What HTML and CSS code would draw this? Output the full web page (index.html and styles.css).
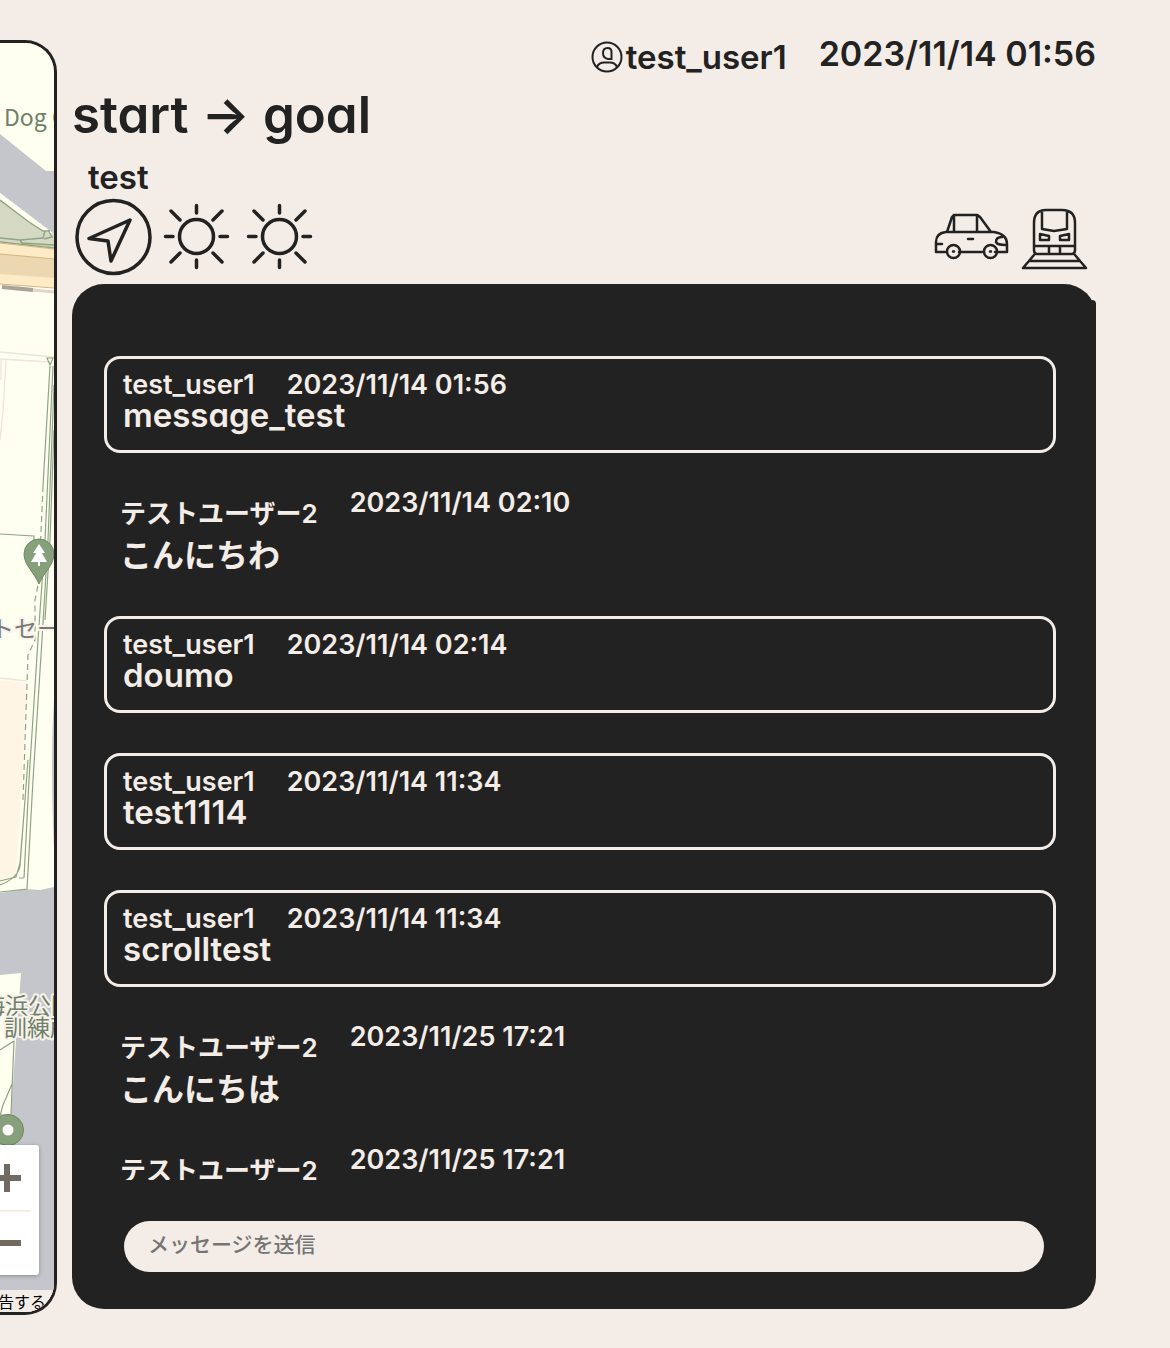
FILE: index.html
```html
<!DOCTYPE html>
<html lang="ja">
<head>
<meta charset="utf-8">
<meta name="viewport" content="width=device-width, initial-scale=1">
<title>start → goal</title>
<link rel="stylesheet" href="styles.css">
</head>
<body>
<div class="shell">
  <aside class="map" aria-label="地図">
    <svg class="map-canvas" viewBox="0 43 54 1269" preserveAspectRatio="xMinYMin slice">
      <rect y="43" width="54" height="1269" fill="#fffff0"/>
      <!-- water and park at the top -->
      <path d="M0 134L46 171H54V234L0 193Z" fill="#c5c6cb"/>
      <path d="M0 193L54 234L46 232L29 222L0 200Z" fill="#fffff0"/>
      <path d="M0 200L29 222L43 231L54 234V248L0 242Z" fill="#d5d9c3"/>
      <path d="M0 200L29 222L43 231H50M0 238L20 240L43 238L45 231M48 230L52 237L44 239M20 240L22 243L54 245M54 248L0 242" fill="none" stroke="#8fa485" stroke-width="1.4"/>
      <!-- main road -->
      <path d="M0 243L54 249V288L0 284Z" fill="#fdebc5"/>
      <path d="M0 254L54 259V278L0 274Z" fill="#ecd8b0"/>
      <path d="M0 243L54 249M0 254L54 259M0 284L54 288" fill="none" stroke="#d3b77f" stroke-width="1.2"/>
      <path d="M2 287L33 290" stroke="#aaa197" stroke-width="4"/>
      <path d="M33 290L54 292" stroke="#e2d5ca" stroke-width="3"/>
      <!-- side streets -->
      <path d="M0 352L54 357M0 359L50 362M1 359V380M6 359L3 412L0 440" fill="none" stroke="#f0e3da" stroke-width="1.3"/>
      <path d="M0 680L27 683L21 800L16 877L0 882Z" fill="#fff5e5"/>
      <path d="M0 678L27 681" stroke="#f0e3da" stroke-width="1.5"/>
      <path d="M54 700Q50 760 54 850Z" fill="#c5c6cb"/>
      <path d="M0 893L26 889L40 890L54 887V1312H0V1110L12 1040L0 1060V975L21 973L18 1008H0Z" fill="#c5c6cb"/>
      <path d="M0 975L21 973L16 1040L11 1114H0Z" fill="#fffff0"/>
      <!-- footpaths -->
      <g fill="none" stroke="#8fa485" stroke-width="1.2">
        <path d="M47 358L53 358L50 365ZM50 366L43 486M53 366L45 540L38 640L29 780L24 878"/>
        <path d="M54 385L48 540L42 640L33 780L27 889L0 892M54 430L50 540L45 620"/>
        <path d="M0 534L34 536L33 560M25 800L20 863L16 877L0 881M28 760L20 866Q18 878 0 885M24 878H19"/>
        <path d="M43 486L39 580L35 600L35 640L28 655L23 800" stroke-dasharray="6 4"/>
        <path d="M0 1050L14 1041L11 1114M12 1084L3 1105L0 1116"/>
      </g>
      <!-- pins -->
      <path d="M39 584C34 572 24 565 24 554A15 15 0 0 1 54 554C54 565 44 572 39 584Z" fill="#87a07c" stroke="#6d8864"/>
      <path d="M39 544L45 553H42L47 562H40V566H38V562H31L36 553H33Z" fill="#fff"/>
      <circle cx="8" cy="1130" r="15.500" fill="#87a07c" stroke="#6d8864"/>
      <circle cx="8" cy="1130" r="5.500" fill="#fff"/>
      <g class="map-label">
        <text x="4" y="126" class="map-label-park">Dog C</text>
        <text x="-9" y="637" class="map-label-place">トセー</text>
        <text x="-18" y="1014">海浜公園</text>
        <text x="4" y="1036">訓練所</text>
      </g>
    </svg>
    <div class="map-zoom">
      <button type="button" aria-label="拡大"><svg width="28" height="28"><path d="M0 14H28M14 0V28"/></svg></button>
      <button type="button" aria-label="縮小"><svg width="28" height="28"><path d="M0 14H28"/></svg></button>
    </div>
    <a class="map-report" href="#">告する</a>
  </aside>

  <main class="main">
    <header class="top">
      <span class="user">
        <svg class="user-icon" viewBox="0 0 32 32"><circle cx="16" cy="16" r="14.500"/><path d="M20.500 18H17Q12 17 12 12Q12 7 16.500 7Q20.500 7 20.500 11ZM6 26Q8 21.500 13 21.500H19Q24 21.500 26 26"/></svg>test_user1
      </span>
      <time class="top-time">2023/11/14 01:56</time>
    </header>
    <h1 class="title">start → goal</h1>
    <p class="comment">test</p>
    <div class="icons">
      <svg viewBox="0 0 80 80"><circle cx="41.500" cy="41" r="36.500"/><path d="M58 24L17 42.500L36 45L39 65Z"/></svg>
      <svg viewBox="0 0 80 80"><circle cx="40.500" cy="40.500" r="17"/><path d="M40.500 9.500V17M40.500 64V71.500M9.500 40.500H17M64 40.500H71.500M15 15L24 24M57 57L66 66M66 15L57 24M24 57L15 66"/></svg>
      <svg viewBox="0 0 80 80"><circle cx="39.500" cy="40.500" r="17"/><path d="M39.500 9.500V17M39.500 64V71.500M8.500 40.500H16M63 40.500H70.500M14 15L23 24M56 57L65 66M65 15L56 24M23 57L14 66"/></svg>
      <svg class="icon-car" viewBox="1 0 80 80"><path d="M14 56H5V46Q5 37 15 36H63Q76 38 76 48V56H64M28 56H51M16 36L21 21Q22 19 24 19H45Q47 19 49 21L60 36M23 19V36M46 19V36M5 48H11M37 43H42M71 41Q65 41 65 46Q66 49 75 49"/><circle cx="22.500" cy="55.500" r="6.500"/><circle cx="59.500" cy="55.500" r="6.500"/><path d="M22 55.500H23M59 55.500H60"/></svg>
      <svg viewBox="2 0 80 80"><path d="M23 58Q20 58 20 54V27Q20 14 32 14H48Q61 14 61 27V54Q61 58 58 58ZM28 15V33L40 35L53 33V15M20 50H61M35 50V58M46 50V58M26 38L35 40V44H26ZM55 38L46 40V44H55Z"/><path d="M20 59L9 72H72L61 59M15 65H66"/></svg>
    </div>

    <section class="chat">
      <div class="messages">
        <article class="message own">
          <div class="meta"><span>test_user1</span><time>2023/11/14 01:56</time></div>
          <p>message_test</p>
        </article>
        <article class="message">
          <div class="meta"><span class="name-ja">テストユーザー2</span><time>2023/11/14 02:10</time></div>
          <p class="body-ja">こんにちわ</p>
        </article>
        <article class="message own">
          <div class="meta"><span>test_user1</span><time>2023/11/14 02:14</time></div>
          <p>doumo</p>
        </article>
        <article class="message own">
          <div class="meta"><span>test_user1</span><time>2023/11/14 11:34</time></div>
          <p>test1114</p>
        </article>
        <article class="message own">
          <div class="meta"><span>test_user1</span><time>2023/11/14 11:34</time></div>
          <p>scrolltest</p>
        </article>
        <article class="message">
          <div class="meta"><span class="name-ja">テストユーザー2</span><time>2023/11/25 17:21</time></div>
          <p class="body-ja">こんにちは</p>
        </article>
        <article class="message">
          <div class="meta"><span class="name-ja">テストユーザー2</span><time>2023/11/25 17:21</time></div>
        </article>
      </div>
      <form class="composer">
        <input type="text" aria-label="メッセージ" placeholder="メッセージを送信">
      </form>
    </section>
  </main>
</div>
</body>
</html>
```
FILE: styles.css
```css
:root {
  --ink: #222;
  --paper: #f4ece6;
}

* {
  box-sizing: border-box;
}

body {
  margin: 0;
  background: var(--paper);
  color: var(--ink);
  font-family: Inter, "Noto Sans CJK JP", sans-serif;
  font-weight: 600;
  font-feature-settings: "cv11";
}

p,
h1 {
  margin: 0;
}

.shell {
  display: flex;
  gap: 15px;
  height: 100vh;
  padding: 40px 74px 33px 0;
}

/* Map */
.map {
  position: relative;
  flex: none;
  width: 57px;
  overflow: hidden;
  border: 3px solid var(--ink);
  border-left: 0;
  border-radius: 0 32px 32px 0;
  background: #c5c6cb;
}

.map-canvas {
  display: block;
  width: 100%;
  height: 100%;
}

.map-label {
  font: 400 23px "Noto Sans CJK JP", sans-serif;
  fill: #6f806a;
  stroke: #f7f3ea;
  stroke-width: 4px;
  stroke-linejoin: round;
  paint-order: stroke;
}

.map-label-park {
  stroke: none;
}

.map-label-place {
  fill: #777;
}

.map-zoom {
  position: absolute;
  right: 15px;
  bottom: 37px;
  width: 65px;
  border-radius: 3px;
  background: #fff;
  box-shadow: 0 1px 4px rgba(0, 0, 0, 0.3);
}

.map-zoom button {
  display: grid;
  place-items: center;
  width: 100%;
  height: 65px;
  padding: 0;
  border: 0;
  background: none;
}

.map-zoom button + button {
  background: linear-gradient(#f7efe2, #f7efe2) 0 0 / 57px 2px no-repeat;
}

.map-zoom path {
  stroke: #706a62;
  stroke-width: 6;
}

.map-report {
  position: absolute;
  right: 0;
  bottom: 0;
  left: 0;
  height: 22px;
  background: var(--paper);
  color: #000;
  font: 400 16px/22px "Noto Sans CJK JP", sans-serif;
  text-decoration: none;
  white-space: nowrap;
  text-indent: -2px;
}

/* Trip heading */
.main {
  display: flex;
  flex: 1;
  flex-direction: column;
  min-width: 0;
  padding-bottom: 6px;
}

.top {
  display: flex;
  justify-content: flex-end;
  gap: 32px;
  margin-bottom: 12px;
  font-size: 33px;
  line-height: 34px;
}

.top-time {
  font-size: 34px;
  line-height: 28px;
}

.user {
  display: flex;
  align-items: center;
  gap: 3px;
}

.user-icon {
  width: 32px;
  height: 32px;
  fill: none;
  stroke: var(--ink);
  stroke-width: 2;
}

.title {
  font-size: 51px;
  font-weight: 600;
  line-height: 58px;
}

.comment {
  margin-top: 14px;
  padding-left: 16px;
  font-size: 33px;
  line-height: 38px;
}

.icons {
  display: flex;
  gap: 4px;
  margin-bottom: 8px;
}

.icons svg {
  width: 80px;
  height: 80px;
  fill: none;
  stroke: var(--ink);
  stroke-width: 3.5;
  stroke-linecap: round;
  stroke-linejoin: round;
}

.icons .icon-car {
  margin-left: auto;
}

.icons .icon-car,
.icons .icon-car + svg {
  stroke-width: 2.5;
}

/* Chat */
.chat {
  display: flex;
  flex: 1;
  flex-direction: column;
  min-height: 0;
  padding: 16px 0 37px;
  border-radius: 32px;
  background: var(--ink);
  color: var(--paper);
}

.messages {
  display: flex;
  flex: 1;
  flex-direction: column;
  gap: 40px;
  min-height: 0;
  padding: 56px 40px 0 32px;
  overflow-y: auto;
  scrollbar-width: none;
  border-radius: 32px 4px 4px 4px;
  background: var(--ink);
}

.message {
  flex: none;
  padding: 0 16px;
  font-size: 33px;
  line-height: 40px;
}

.own {
  padding: 16px 16px 15px;
  border: 3px solid var(--paper);
  border-radius: 16px;
}

.meta {
  display: flex;
  align-items: flex-start;
  gap: 32px;
  font-size: 27px;
  line-height: 20px;
}

.name-ja {
  font-size: 26px;
  line-height: 42px;
}

.body-ja {
  font-size: 32px;
  line-height: 41px;
}

.composer {
  display: flex;
  margin: 41px 52px 0;
}

.composer input {
  flex: 1;
  min-width: 0;
  height: 51px;
  padding: 0 24px 4px;
  border: 0;
  border-radius: 26px;
  background: var(--paper);
  color: var(--ink);
  font: inherit;
  font-size: 21px;
  font-weight: 500;
}

.composer input::placeholder {
  color: #757575;
  opacity: 1;
}
```
